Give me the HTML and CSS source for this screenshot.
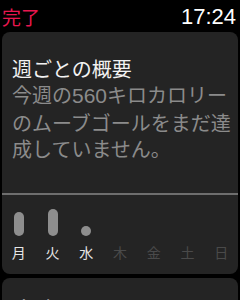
FILE: index.html
```html
<!DOCTYPE html>
<html lang="ja">
<head>
<meta charset="utf-8">
<link rel="stylesheet" href="styles.css">
</head>
<body>
<header class="status">
  <span class="done">完了</span>
  <span class="time">17:24</span>
</header>
<section class="card">
  <div class="summary">
    <h1 class="title">週ごとの概要</h1>
    <p class="desc">今週の<span class="num">560</span>キロカロリーのムーブゴールをまだ達成していません。</p>
  </div>
  <div class="divider"></div>
  <div class="week">
    <div class="day"><div class="slot"><div class="bar" style="height:24px"></div></div><span class="label">月</span></div>
    <div class="day"><div class="slot"><div class="bar" style="height:27px"></div></div><span class="label">火</span></div>
    <div class="day"><div class="slot"><div class="bar" style="height:10px"></div></div><span class="label">水</span></div>
    <div class="day future"><div class="slot"></div><span class="label">木</span></div>
    <div class="day future"><div class="slot"></div><span class="label">金</span></div>
    <div class="day future"><div class="slot"></div><span class="label">土</span></div>
    <div class="day future"><div class="slot"></div><span class="label">日</span></div>
  </div>
</section>
<section class="card next">
  <h2 class="next-title">合計</h2>
</section>
</body>
</html>
```
FILE: styles.css
```css
html, body {
  margin: 0;
  padding: 0;
  background: #000;
  overflow: hidden;
  height: 300px;
}
body {
  font-family: "Noto Sans CJK JP", "Noto Sans", sans-serif;
  color: #fff;
}
.status {
  height: 30px;
  padding: 2px 4px 0 2px;
  display: flex;
  justify-content: space-between;
  align-items: center;
}
.done {
  color: #e8174f;
  font-size: 19px;
  line-height: 22px;
}
.time {
  font-family: "Liberation Sans", Arial, sans-serif;
  font-size: 22px;
  line-height: 24px;
  color: #fff;
}
.card {
  background: #242424;
  border-radius: 8px;
  margin: 0 2px;
}
.summary {
  padding: 24px 0 0 10px;
}
.title {
  margin: 0;
  font-size: 20px;
  font-weight: normal;
  line-height: 26px;
  color: #f2f2f2;
}
.desc {
  margin: 0;
  font-size: 20px;
  line-height: 26.5px;
  color: #8b8b8b;
}
.num {
  font-family: "Liberation Sans", Arial, sans-serif;
  font-size: 21px;
}
.divider {
  height: 2px;
  background: #6e6e6e;
  margin-top: 30.5px;
}
.week {
  display: grid;
  grid-template-columns: repeat(7, 1fr);
  padding: 11px 0 14.5px;
}
.day {
  display: flex;
  flex-direction: column;
  align-items: center;
}
.slot {
  height: 30px;
  display: flex;
  align-items: flex-end;
  justify-content: center;
}
.bar {
  width: 10px;
  border-radius: 5px;
  background: #8e8e8e;
}
.label {
  margin-top: 7.5px;
  font-size: 14px;
  line-height: 16px;
  color: #e6e6e6;
}
.future .label {
  color: #4a4a4a;
}
.next {
  margin-top: 4px;
  height: 80px;
  padding: 18px 0 0 12px;
}
.next-title {
  margin: 0;
  font-size: 20px;
  font-weight: normal;
  line-height: 26px;
  color: #f2f2f2;
}
```
